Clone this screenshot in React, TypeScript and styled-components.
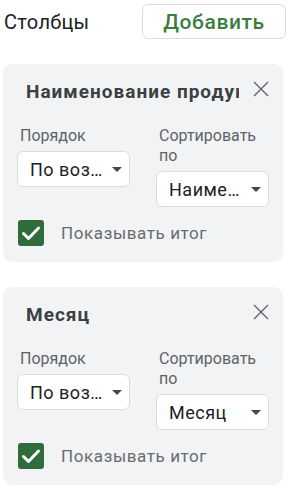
import React from "react";
import styled, { createGlobalStyle } from "styled-components";

const GlobalStyle = createGlobalStyle`
  body {
    margin: 0;
    background: #fff;
    font-family: Roboto, "Liberation Sans", Arial, sans-serif;
  }
  * {
    box-sizing: border-box;
  }
`;

const Page = styled.div`
  width: 295px;
  padding: 4px 9px 0 3px;
`;

const Header = styled.div`
  display: flex;
  justify-content: space-between;
  align-items: center;
  padding-left: 1px;
`;

const HeaderTitle = styled.span`
  font-size: 20px;
  letter-spacing: 0.3px;
  color: #202124;
`;

const AddButton = styled.button`
  width: 144px;
  height: 35px;
  border: 1px solid #dadce0;
  border-radius: 6px;
  background: #fff;
  color: #3b7d3f;
  font-family: inherit;
  font-size: 21px;
  letter-spacing: 0.6px;
  font-weight: 500;
  cursor: pointer;
`;

const Card = styled.div`
  width: 280px;
  margin-top: 25px;
  padding: 16px 14px 16px 14px;
  background: #f1f3f4;
  border-radius: 9px;
`;

const TitleRow = styled.div`
  display: flex;
  align-items: flex-start;
  height: 24px;
  padding-left: 9px;
`;

const Title = styled.div`
  flex: 1;
  min-width: 0;
  margin-right: 14px;
  overflow: hidden;
  white-space: nowrap;
  font-size: 19px;
  letter-spacing: 1px;
  line-height: 24px;
  font-weight: 700;
  color: #3c4043;
`;

const CloseButton = styled.button`
  width: 16px;
  height: 16px;
  margin-top: 1px;
  padding: 0;
  border: none;
  background: none;
  display: flex;
  cursor: pointer;
`;

const Fields = styled.div`
  display: grid;
  grid-template-columns: 113px 113px;
  column-gap: 26px;
  margin-top: 22px;
  align-items: start;
`;

const Field = styled.div`
  display: flex;
  flex-direction: column;
`;

const Label = styled.div`
  font-size: 16px;
  line-height: 20px;
  color: #5f6368;
  padding-left: 3px;
  margin-bottom: 5px;
`;

const Select = styled.div`
  display: flex;
  align-items: center;
  height: 36px;
  padding: 0 7px 0 12px;
  border: 1px solid #dadce0;
  border-radius: 6px;
  background: #fff;
`;

const SelectValue = styled.span`
  flex: 1;
  min-width: 0;
  margin-right: 5px;
  overflow: hidden;
  white-space: nowrap;
  text-overflow: ellipsis;
  font-size: 18px;
  letter-spacing: 0.5px;
  color: #202124;
`;

const Caret = styled.span`
  width: 0;
  height: 0;
  border-left: 5px solid transparent;
  border-right: 5px solid transparent;
  border-top: 5px solid #444746;
`;

const CheckRow = styled.label`
  display: flex;
  align-items: center;
  gap: 17px;
  margin-top: 13px;
  padding-left: 1px;
  cursor: pointer;
`;

const CheckBox = styled.span`
  width: 26px;
  height: 26px;
  border-radius: 3px;
  background: #2f6b3b;
  display: flex;
  align-items: center;
  justify-content: center;
`;

const CheckLabel = styled.span`
  font-size: 17px;
  letter-spacing: 0.6px;
  color: #686c70;
`;

const CloseIcon = () => (
  <svg width="16" height="16" viewBox="0 0 16 16">
    <path d="M1 1 L15 15 M15 1 L1 15" stroke="#5f6368" strokeWidth="1.4" fill="none" />
  </svg>
);

const CheckIcon = () => (
  <svg width="26" height="26" viewBox="0 0 26 26">
    <path d="M5.5 13.5 L10.5 18.5 L20.5 8" stroke="#fff" strokeWidth="3" fill="none" strokeLinecap="round" strokeLinejoin="round" />
  </svg>
);

type ColumnProps = {
  title: string;
  order: string;
  sortBy: string;
};

const ColumnCard = ({ title, order, sortBy }: ColumnProps) => (
  <Card>
    <TitleRow>
      <Title>{title}</Title>
      <CloseButton aria-label="Удалить">
        <CloseIcon />
      </CloseButton>
    </TitleRow>
    <Fields>
      <Field>
        <Label>Порядок</Label>
        <Select>
          <SelectValue>{order}</SelectValue>
          <Caret />
        </Select>
      </Field>
      <Field>
        <Label>Сортировать по</Label>
        <Select>
          <SelectValue>{sortBy}</SelectValue>
          <Caret />
        </Select>
      </Field>
    </Fields>
    <CheckRow>
      <CheckBox>
        <CheckIcon />
      </CheckBox>
      <CheckLabel>Показывать итог</CheckLabel>
    </CheckRow>
  </Card>
);

const App = () => {
  return (
    <>
      <GlobalStyle />
      <Page>
        <Header>
          <HeaderTitle>Столбцы</HeaderTitle>
          <AddButton>Добавить</AddButton>
        </Header>
        <ColumnCard
          title="Наименование продукта"
          order="По возрастанию"
          sortBy="Наименование продукта"
        />
        <ColumnCard title="Месяц" order="По возрастанию" sortBy="Месяц" />
      </Page>
    </>
  );
};

export default App;
